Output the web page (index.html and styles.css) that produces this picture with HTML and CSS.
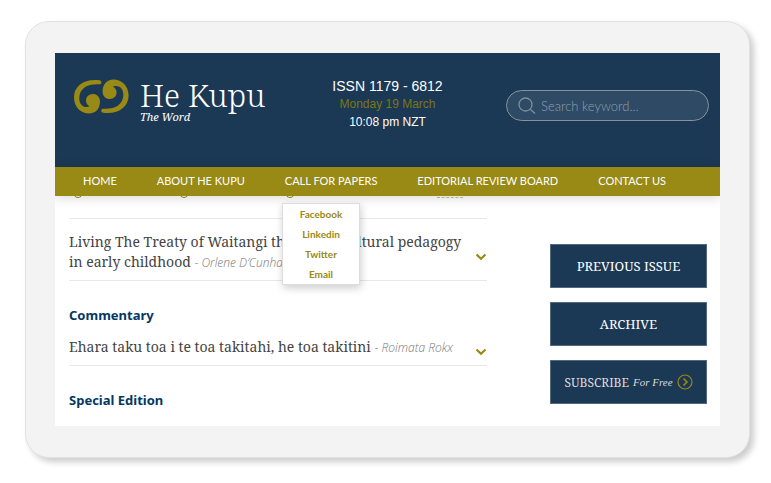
FILE: index.html
```html
<!DOCTYPE html>
<html lang="en">
<head>
    <meta charset="UTF-8">
    <meta name="viewport" content="width=device-width, initial-scale=1.0">
    <title>He Kupu - The Word</title>
    <link rel="stylesheet" href="styles.css">
</head>
<body>
    <div class="tablet">
        <div class="screen">
            <header class="header">
                <a class="logo" href="#">
                    <svg class="logo-mark" viewBox="0 0 56 36" width="56" height="36">
                        <path id="curl" d="M25.5 1.3 C10 -0.5 0 7 0 18.5 C0 29 8 34.5 15 34.5 C22 34.5 26 29.5 26 22.5 C26 17.5 22.5 15 19 15 C14.5 15 12 18 12 21.5 C12 24.5 13.5 26 15.5 27.5 C9 29.5 5 25 5.3 18.5 C5.8 9 14 4.6 25.5 5.3 C28 5 28 1.8 25.5 1.3 Z" fill="#998915"/>
                        <use href="#curl" transform="rotate(180 27.3 17.5)"/>
                    </svg>
                    <span class="logo-text">
                        <span class="logo-title">He Kupu</span>
                        <span class="logo-tagline">The Word</span>
                    </span>
                </a>
                <div class="issue-info">
                    <div class="issn">ISSN 1179 - 6812</div>
                    <div class="date">Monday 19 March</div>
                    <div class="time">10:08 pm NZT</div>
                </div>
                <form class="search">
                    <svg viewBox="0 0 18 18" width="18" height="18" fill="none" stroke="#7d90a0" stroke-width="1.3">
                        <circle cx="7.5" cy="7.5" r="6.5"/>
                        <path d="M12.2 12.2 L17 16.5"/>
                    </svg>
                    <input type="text" class="search-input" placeholder="Search keyword..." aria-label="Search keyword">
                </form>
            </header>
            <nav class="nav">
                <a href="#">HOME</a>
                <a href="#">ABOUT HE KUPU</a>
                <a href="#">CALL FOR PAPERS</a>
                <a href="#">EDITORIAL REVIEW BOARD</a>
                <a href="#">CONTACT US</a>
            </nav>
            <main class="main">
                <div class="articles">
                    <!-- Bottom of the share row, scrolled under the nav -->
                    <div class="share-row">
                        <i class="ring"></i>
                        <i class="ring"></i>
                        <i class="ring"></i>
                        <i class="dots"></i>
                    </div>
                    <article class="article">
                        <p class="article-title">Living The Treaty of Waitangi through bicultural pedagogy<br>in early childhood <span class="author">- <em>Orlene D’Cunha</em></span></p>
                        <button class="toggle" aria-label="Show abstract">
                            <svg viewBox="0 0 12 8" width="12" height="8"><path d="M1.5 1.5 L6 5.8 L10.5 1.5" fill="none" stroke="#998915" stroke-width="2.2"/></svg>
                        </button>
                        <div class="share-menu">
                            <a href="#">Facebook</a>
                            <a href="#">Linkedin</a>
                            <a href="#">Twitter</a>
                            <a href="#">Email</a>
                        </div>
                    </article>
                    <h2 class="section-title">Commentary</h2>
                    <article class="article">
                        <p class="article-title">Ehara taku toa i te toa takitahi, he toa takitini <span class="author">- <em>Roimata Rokx</em></span></p>
                        <button class="toggle" aria-label="Show abstract">
                            <svg viewBox="0 0 12 8" width="12" height="8"><path d="M1.5 1.5 L6 5.8 L10.5 1.5" fill="none" stroke="#998915" stroke-width="2.2"/></svg>
                        </button>
                    </article>
                    <h2 class="section-title">Special Edition</h2>
                </div>
                <aside class="sidebar">
                    <button class="side-button">PREVIOUS ISSUE</button>
                    <button class="side-button">ARCHIVE</button>
                    <button class="side-button subscribe">
                        <span>SUBSCRIBE</span>
                        <em>For Free</em>
                        <svg viewBox="0 0 16 16" width="16" height="16" fill="none" stroke="#998915">
                            <circle cx="8" cy="8" r="7" stroke-width="1.2"/>
                            <path d="M6.5 4.5 L10 8 L6.5 11.5" stroke-width="1.6"/>
                        </svg>
                    </button>
                </aside>
            </main>
        </div>
    </div>
</body>
</html>
```

FILE: styles.css
```css
* {
    box-sizing: border-box;
}

body {
    margin: 0;
    padding: 21px 21px 24px 25px;
    background-color: #fff;
    font-family: "Open Sans", sans-serif;
}

.tablet {
    padding: 31px 29px;
    background-color: #f3f3f3;
    border: 1px solid #e2e2e2;
    border-radius: 24px;
    box-shadow: 4px 4px 6px rgba(0, 0, 0, 0.2);
}

.screen {
    background-color: #fff;
    overflow: hidden;
}

.header {
    display: grid;
    grid-template-columns: 1fr auto 1fr;
    align-items: start;
    padding: 24px 11px 0;
    height: 114px;
    background-color: #1b3855;
    color: #fff;
}

.logo {
    display: flex;
    gap: 10px;
    padding-left: 8px;
    color: #fff;
    text-decoration: none;
}

.logo-mark {
    margin-top: 2px;
}

.logo-text {
    display: flex;
    flex-direction: column;
    padding-top: 2px;
    font-family: "Noto Serif", "Liberation Serif", serif;
}

.logo-title {
    font-size: 31px;
    font-weight: 300;
    line-height: 32px;
    white-space: nowrap;
}

.logo-tagline {
    font-size: 11px;
    line-height: 12px;
    font-style: italic;
}

.issue-info {
    font-family: "Liberation Sans", sans-serif;
    text-align: center;
    line-height: 18px;
}

.issn {
    font-size: 14px;
}

.date {
    font-size: 12px;
    color: #7b7712;
}

.time {
    font-size: 12px;
}

.search {
    display: flex;
    align-items: center;
    justify-self: end;
    gap: 5px;
    width: 203px;
    height: 31px;
    margin-top: 13px;
    padding: 0 11px;
    background-color: #2e4a64;
    border: 1px solid #8592a0;
    border-radius: 16px;
}

.search-input {
    flex: 1;
    min-width: 0;
    padding: 0;
    border: none;
    outline: none;
    background: none;
    color: #fff;
    font-family: Lato, sans-serif;
    font-size: 13px;
    font-weight: 300;
}

.search-input::placeholder {
    color: #8fa0b0;
}

.nav {
    position: relative;
    display: flex;
    justify-content: space-between;
    padding: 0 54px 2px 28px;
    background-color: #998915;
    box-shadow: 0 2px 12px rgba(0, 0, 0, 0.15);
}

.nav a {
    color: #fff;
    font-family: Lato, sans-serif;
    font-size: 11px;
    line-height: 27px;
    text-decoration: none;
    white-space: nowrap;
}

.main {
    display: flex;
    justify-content: space-between;
    padding: 0 13px 16px 14px;
}

.articles {
    width: 418px;
}

.share-row {
    display: flex;
    align-items: flex-end;
    gap: 96px;
    height: 23px;
    padding: 0 24px 20px 4px;
    border-bottom: 1px solid #e8e8e8;
    overflow: hidden;
}

.ring {
    width: 10px;
    height: 10px;
    border: 1px solid #998915;
    border-radius: 50%;
}

.dots {
    width: 26px;
    margin-left: auto;
    border-bottom: 1px dashed #c9c188;
}

.article {
    position: relative;
    display: flex;
    justify-content: space-between;
    align-items: center;
    border-bottom: 1px solid #e8e8e8;
    padding: 13px 0 7px;
}

.article-title {
    margin: 0;
    color: #444;
    font-family: "Noto Serif", "DejaVu Serif Condensed", "DejaVu Serif", serif;
    font-size: 14px;
    line-height: 20px;
    white-space: nowrap;
}

.author {
    color: #777;
    font-family: "Open Sans", sans-serif;
    font-size: 12px;
    font-weight: 300;
}

.toggle {
    display: flex;
    padding: 8px 0 0;
    border: none;
    background: none;
    cursor: pointer;
}

.share-menu {
    position: absolute;
    top: -16px;
    left: 213px;
    display: flex;
    flex-direction: column;
    width: 78px;
    background-color: #fff;
    border: 1px solid #ddd;
    box-shadow: 1px 3px 8px rgba(0, 0, 0, 0.2);
}

.share-menu a {
    color: #998915;
    font-family: Lato, sans-serif;
    font-size: 10px;
    font-weight: bold;
    line-height: 20px;
    text-align: center;
    text-decoration: none;
}

.section-title {
    margin: 24px 0 0;
    color: #033863;
    font-family: "Noto Sans", sans-serif;
    font-size: 13px;
    line-height: 20px;
}

.section-title + .article {
    padding-top: 12px;
}

.sidebar {
    display: flex;
    flex-direction: column;
    gap: 14px;
    width: 157px;
    padding-top: 48px;
}

.side-button {
    height: 44px;
    padding: 0;
    border: 1px solid #53697f;
    background-color: #1b3855;
    color: #fff;
    font-family: "Noto Serif", "DejaVu Serif Condensed", "DejaVu Serif", serif;
    font-size: 13px;
    cursor: pointer;
}

.subscribe {
    display: flex;
    justify-content: center;
    align-items: center;
    gap: 4px;
    color: #ddd;
    font-size: 12px;
}

.subscribe em {
    font-family: "Liberation Serif", serif;
    font-size: 11px;
}
```
